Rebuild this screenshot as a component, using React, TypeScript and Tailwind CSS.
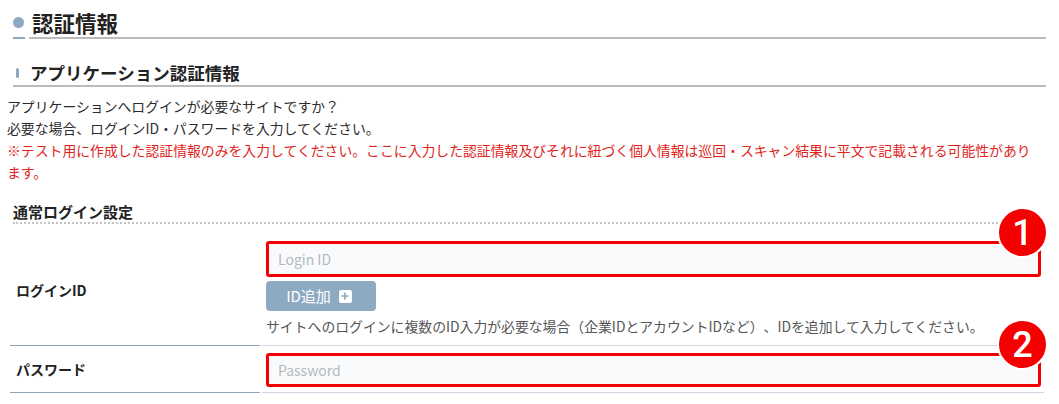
import { Plus } from "lucide-react";

const font = { fontFamily: '"Noto Sans CJK JP", "Noto Sans", sans-serif' };

const Badge = ({ n }: { n: string }) => (
  <div className="absolute right-[-7px] top-[-34px] flex size-[51px] items-center justify-center rounded-full border-2 border-white bg-[#f40000] text-[36px] font-medium leading-none text-white [font-family:Roboto,sans-serif]">
    {n}
  </div>
);

const App = () => {
  return (
    <div
      className="min-h-[404px] w-[1059px] bg-white px-[13px] text-[#2b2b2b] [text-spacing-trim:space-all]"
      style={font}
    >
      {/* page title */}
      <div className="flex">
        <div className="flex w-[12px] items-start border-b-2 border-[#8eaac3] pt-[17px]">
          <span className="size-[11px] rounded-full bg-[#8eaac3]" />
        </div>
        <h1 className="ml-[4px] flex-1 border-b-2 border-[#bbbbbb] pl-[3px] pt-[9px] text-[21.5px] font-bold leading-[28px] text-[#222]">
          認証情報
        </h1>
      </div>

      {/* section title */}
      <h2 className="mt-[22px] flex items-center border-b-2 border-[#bbbbbb] text-[17.5px] font-bold leading-[24px] text-[#222]">
        <span className="ml-[3px] mr-[11px] h-[10px] w-[3px] rounded-sm bg-[#8eaac3]" />
        アプリケーション認証情報
      </h2>

      <div className="ml-[-6px] mr-[4px] mt-[8px] text-[13.85px] leading-[22px]">
        <p>アプリケーションへログインが必要なサイトですか？</p>
        <p>必要な場合、ログインID・パスワードを入力してください。</p>
        <p className="text-[#e0241b]">
          ※テスト用に作成した認証情報のみを入力してください。ここに入力した認証情報及びそれに紐づく個人情報は巡回・スキャン結果に平文で記載される可能性があります。
        </p>
      </div>

      <h3 className="mt-[19px] border-b-2 border-dotted border-[#c4c4c4] text-[15px] font-bold leading-[20px] text-[#222]">
        通常ログイン設定
      </h3>

      <div className="ml-[-3px] mr-[2px] grid grid-cols-[250px_1fr] gap-x-[2px]">
        <div className="flex items-center border-b border-[#8fa3b8] pl-[6px] pt-[12px] text-[14px] font-bold text-[#222]">
          ログインID
        </div>
        <div className="border-b border-[#cdd6e0] pb-[8px] pl-[4px] pr-[3px] pt-[17px]">
          <div className="relative">
            <input
              placeholder="Login ID"
              className="h-[36px] w-full rounded-[3px] border-[3px] border-[#f40000] bg-[#f9fafc] px-[9px] text-[14px] outline-none placeholder:text-[#b4b8bf]"
            />
            <Badge n="1" />
          </div>
          <button className="mt-[4px] flex h-[30px] w-[110px] items-center justify-center gap-[8px] rounded-[4px] bg-[#8eaac3] pr-[4px] text-[15px] text-white">
            ID追加
            <span className="flex size-[13px] items-center justify-center rounded-[2px] bg-white">
              <Plus className="size-[10px] text-[#8eaac3]" strokeWidth={4} />
            </span>
          </button>
          <p className="mt-[4px] text-[13.85px] leading-[22px] text-[#555]">
            サイトへのログインに複数のID入力が必要な場合（企業IDとアカウントIDなど）、IDを追加して入力してください。
          </p>
        </div>

        <div className="flex items-center border-b border-[#8fa3b8] pl-[6px] text-[14px] font-bold text-[#222]">
          パスワード
        </div>
        <div className="border-b border-[#cdd6e0] pb-[5px] pl-[4px] pr-[3px] pt-[7px]">
          <div className="relative">
            <input
              type="password"
              placeholder="Password"
              className="h-[34px] w-full rounded-[3px] border-[3px] border-[#f40000] bg-[#f9fafc] px-[9px] text-[14px] outline-none placeholder:text-[#b4b8bf]"
            />
            <Badge n="2" />
          </div>
        </div>
      </div>
    </div>
  );
};

export default App;
